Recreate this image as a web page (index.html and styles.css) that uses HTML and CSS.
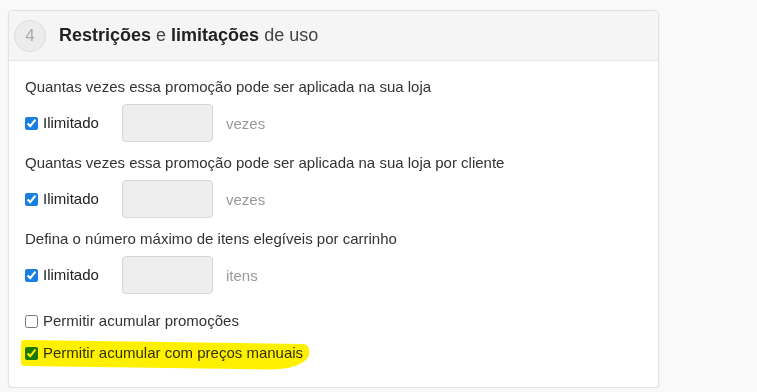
FILE: index.html
```html
<!DOCTYPE html>
<html lang="pt-BR">
<head>
    <meta charset="UTF-8">
    <meta name="viewport" content="width=device-width, initial-scale=1.0">
    <title>Restrições e limitações de uso</title>
    <link rel="stylesheet" href="styles.css">
</head>
<body>

    <div class="panel">
        <div class="panel-heading">
            <span class="step">4</span>
            <h3><b>Restrições</b> e <b>limitações</b> de uso</h3>
        </div>
        <div class="panel-body">
            <div class="group">
                <p class="question">Quantas vezes essa promoção pode ser aplicada na sua loja</p>
                <div class="limit-row">
                    <label class="check unlimited"><input type="checkbox" checked> Ilimitado</label>
                    <input type="text" class="qty" disabled>
                    <span class="unit">vezes</span>
                </div>
            </div>
            <div class="group">
                <p class="question">Quantas vezes essa promoção pode ser aplicada na sua loja por cliente</p>
                <div class="limit-row">
                    <label class="check unlimited"><input type="checkbox" checked> Ilimitado</label>
                    <input type="text" class="qty" disabled>
                    <span class="unit">vezes</span>
                </div>
            </div>
            <div class="group">
                <p class="question">Defina o número máximo de itens elegíveis por carrinho</p>
                <div class="limit-row">
                    <label class="check unlimited"><input type="checkbox" checked> Ilimitado</label>
                    <input type="text" class="qty" disabled>
                    <span class="unit">itens</span>
                </div>
            </div>
            <label class="check option"><input type="checkbox"> Permitir acumular promoções</label>
            <label class="check option marked"><input type="checkbox" checked> Permitir acumular com preços manuais</label>
        </div>
    </div>

</body>
</html>
```

FILE: styles.css
```css
body {
    margin: 0;
    background: #f9f9f9;
    font-family: "Liberation Sans", Arial, sans-serif;
    color: #333;
}
.panel {
    width: 649px;
    margin: 10px 0 0 8px;
    background: #fff;
    border: 1px solid #e3e3e3;
    border-radius: 4px;
    box-shadow: 0 1px 2px rgba(0, 0, 0, 0.08);
}
.panel-heading {
    display: flex;
    align-items: center;
    height: 49px;
    padding-left: 5px;
    background: #f5f5f5;
    border-bottom: 1px solid #e6e6e6;
    border-radius: 4px 4px 0 0;
}
.step {
    width: 30px;
    height: 30px;
    border: 1px solid #ddd;
    border-radius: 50%;
    background: #ececec;
    color: #aaa;
    font-size: 17px;
    display: flex;
    align-items: center;
    justify-content: center;
    margin-right: 13px;
}
.panel-heading h3 {
    margin: 0;
    font-size: 18px;
    font-weight: normal;
    color: #444;
}
.panel-heading b {
    color: #222;
}
.panel-body {
    padding: 16px 16px 24px 16px;
}
.group {
    margin-bottom: 11px;
}
.question {
    margin: 0 0 7px 0;
    font-size: 15px;
    line-height: 20px;
}
.limit-row {
    display: flex;
    align-items: center;
}
.check {
    display: flex;
    align-items: center;
    font-size: 15px;
    line-height: 20px;
}
.check input {
    margin: 0 5px 0 0;
    width: 13px;
    height: 13px;
    accent-color: #1a7fe0;
}
.unlimited {
    width: 97px;
    color: #222;
}
.qty {
    width: 89px;
    height: 36px;
    padding: 0;
    border: 1px solid #d6d6d6;
    border-radius: 4px;
    background: #eee;
    margin-right: 13px;
}
.unit {
    color: #999;
    font-size: 15px;
}
.option {
    margin-top: 17px;
}
.marked {
    margin-top: 12px;
    position: relative;
    width: max-content;
}
.marked::after {
    content: "";
    position: absolute;
    left: -4px;
    right: -6px;
    top: -1px;
    bottom: -5px;
    background: #fff000;
    border-radius: 2px 6px 40px 4px / 2px 6px 16px 4px;
    transform: rotate(0.8deg);
    mix-blend-mode: multiply;
    pointer-events: none;
}
```
